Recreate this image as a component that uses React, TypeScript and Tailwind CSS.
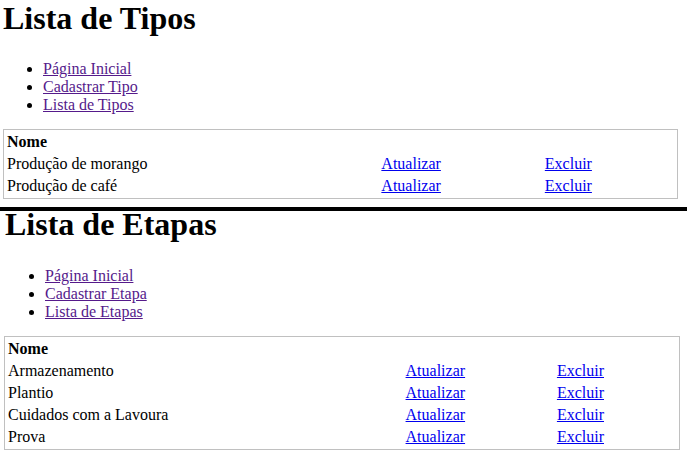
import React from 'react';

type Row = { nome: string };

const tipos: Row[] = [{ nome: 'Produção de morango' }, { nome: 'Produção de café' }];
const etapas: Row[] = [
  { nome: 'Armazenamento' },
  { nome: 'Plantio' },
  { nome: 'Cuidados com a Lavoura' },
  { nome: 'Prova' },
];

function DataTable({ rows, cols, className }: { rows: Row[]; cols: [number, number, number]; className: string }) {
  return (
    <table className={`table-fixed border-separate border-spacing-[2px] border border-[#c0c0c0] ${className}`}>
      <colgroup>
        <col style={{ width: cols[0] }} />
        <col style={{ width: cols[1] }} />
        <col style={{ width: cols[2] }} />
      </colgroup>
      <thead>
        <tr>
          <th className="p-[1px] text-left font-bold leading-[18px]">Nome</th>
        </tr>
      </thead>
      <tbody>
        {rows.map((row) => (
          <tr key={row.nome}>
            <td className="p-[1px] leading-[18px] whitespace-nowrap">{row.nome}</td>
            <td className="p-[1px] leading-[18px]">
              <a href="#" className="text-[#0000ee] underline">Atualizar</a>
            </td>
            <td className="p-[1px] leading-[18px]">
              <a href="#" className="text-[#0000ee] underline">Excluir</a>
            </td>
          </tr>
        ))}
      </tbody>
    </table>
  );
}

export default function App() {
  return (
    <div className="w-[687px] h-[457px] overflow-hidden bg-white text-black text-[16px] font-['Liberation_Serif','Times_New_Roman',serif]">
      {/* Lista de Tipos */}
      <section className="pl-[3px]">
        <h1 className="text-[32px] font-bold leading-[37px]">Lista de Tipos</h1>
        <ul className="mt-[23px] list-disc pl-[40px] leading-[18px]">
          <li><a href="#" className="text-[#551a8b] underline">Página Inicial</a></li>
          <li><a href="#" className="text-[#551a8b] underline">Cadastrar Tipo</a></li>
          <li><a href="#" className="text-[#551a8b] underline">Lista de Tipos</a></li>
        </ul>
        <DataTable rows={tipos} cols={[369, 160, 130]} className="mt-[15px] w-[675px]" />
      </section>

      <div className="mt-[8px] h-[4px] w-full bg-black" />

      {/* Lista de Etapas */}
      <section className="pl-[4px]">
        <h1 className="mt-[1px] ml-[1px] text-[32px] font-bold leading-[24px]">Lista de Etapas</h1>
        <ul className="mt-[31px] list-disc pl-[41px] leading-[18px]">
          <li><a href="#" className="text-[#551a8b] underline">Página Inicial</a></li>
          <li><a href="#" className="text-[#551a8b] underline">Cadastrar Etapa</a></li>
          <li><a href="#" className="text-[#551a8b] underline">Lista de Etapas</a></li>
        </ul>
        <DataTable rows={etapas} cols={[392, 148, 120]} className="mt-[15px] w-[676px]" />
      </section>
    </div>
  );
}
